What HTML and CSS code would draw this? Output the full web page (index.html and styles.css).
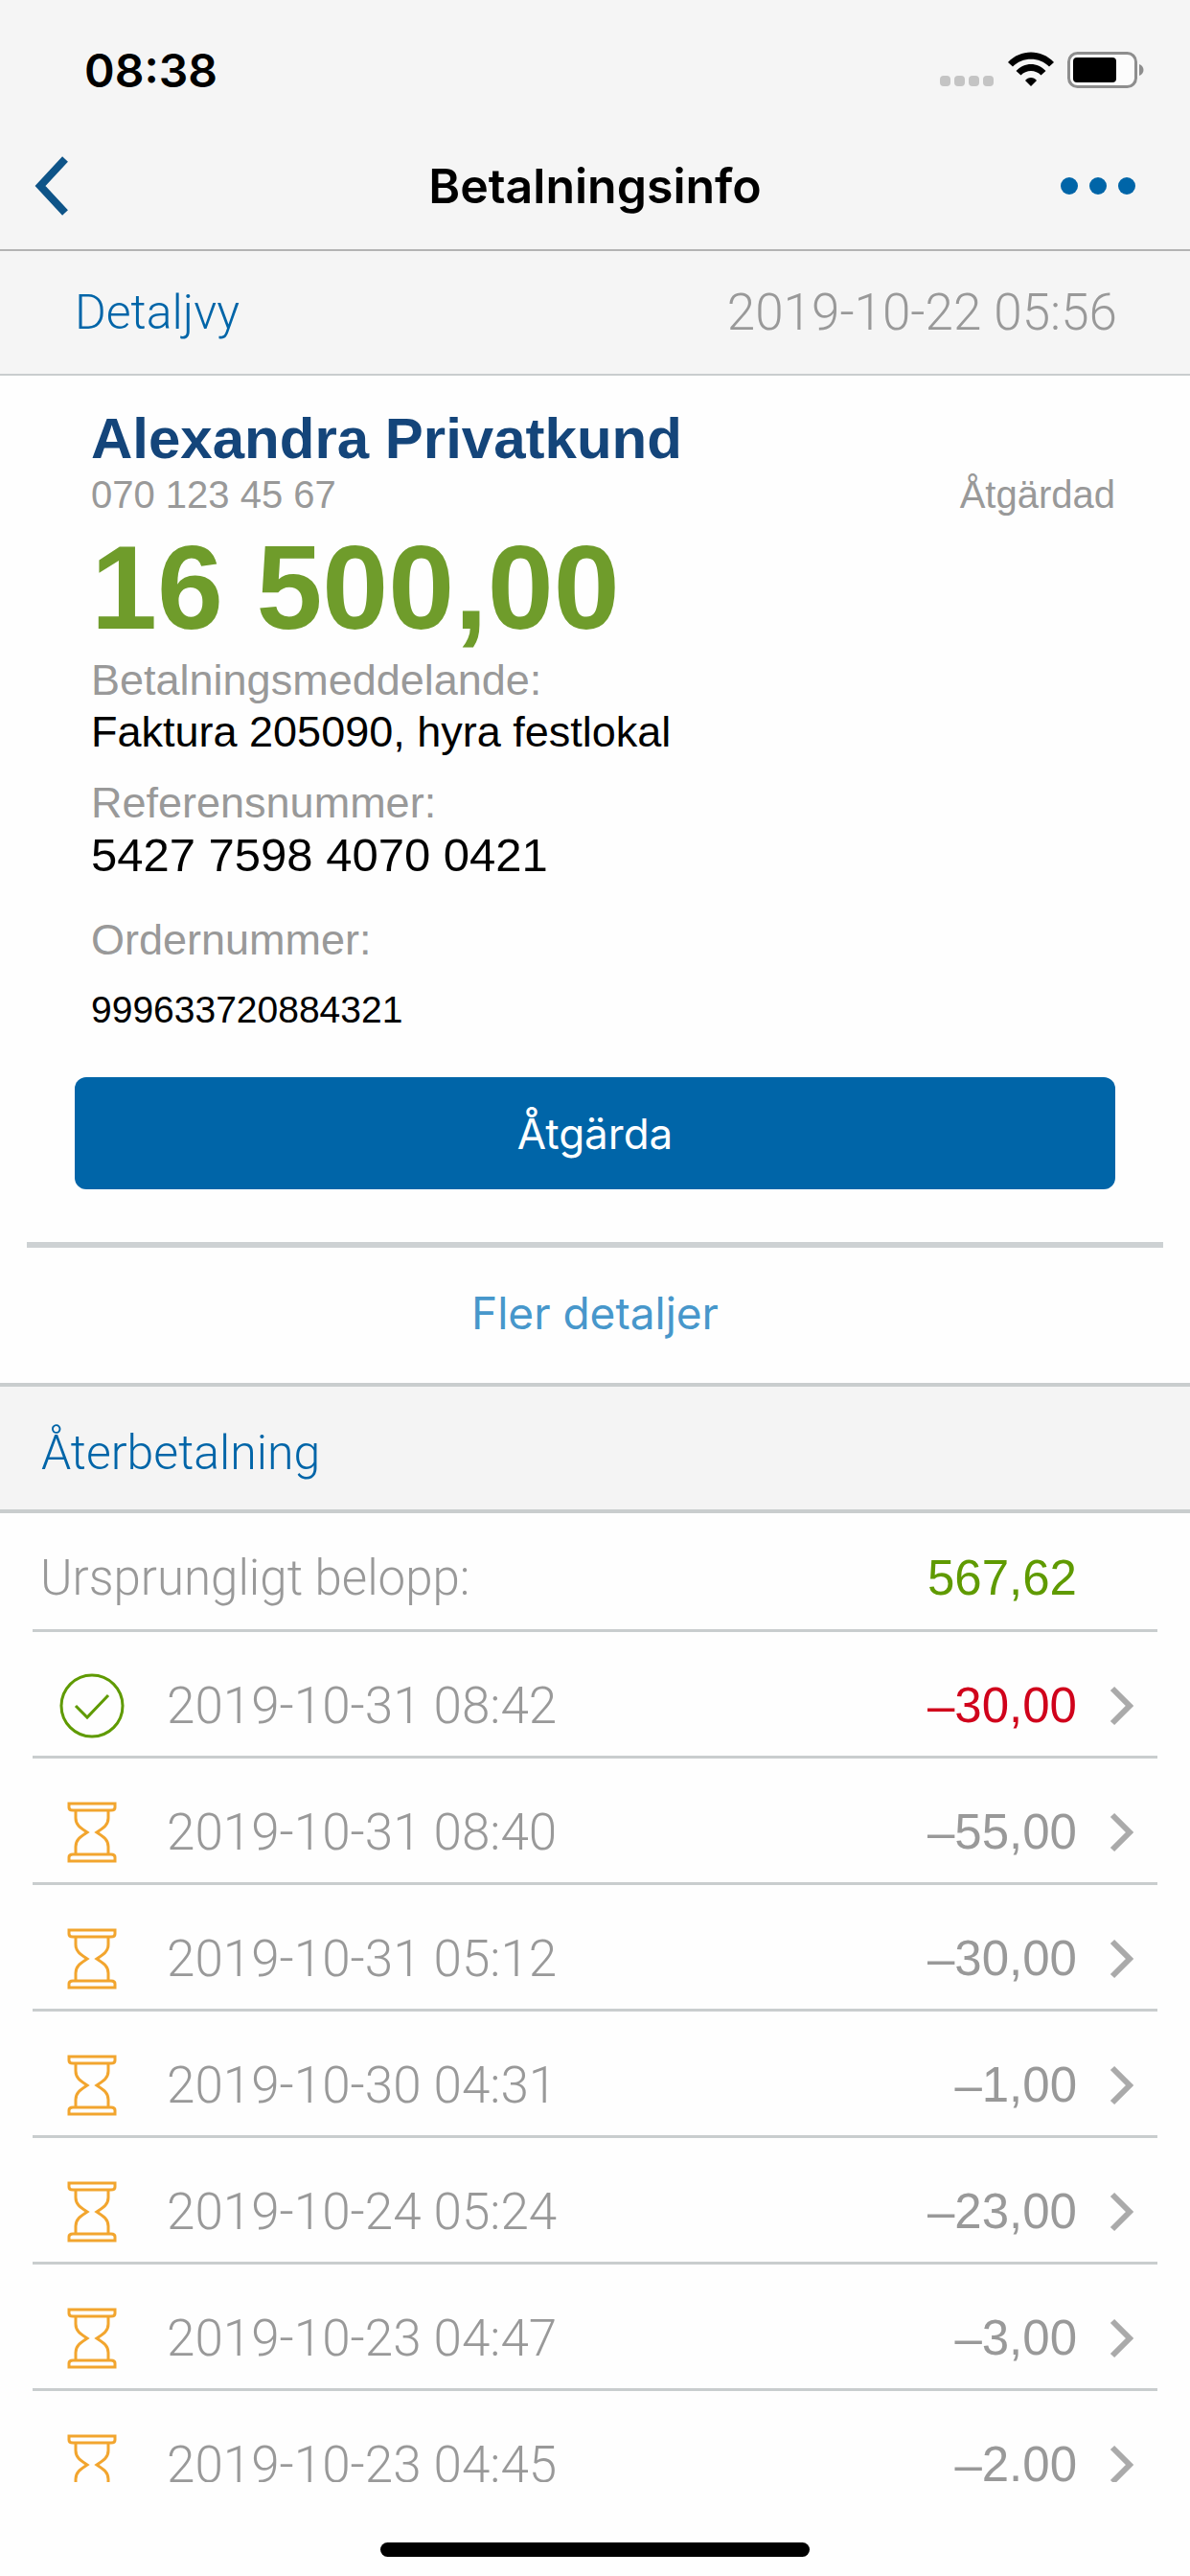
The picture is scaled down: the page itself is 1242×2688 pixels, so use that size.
FILE: index.html
```html
<!DOCTYPE html>
<html lang="sv">
<head>
    <meta charset="UTF-8">
    <meta name="viewport" content="width=device-width, initial-scale=1.0">
    <title>Betalningsinfo</title>
    <link rel="stylesheet" href="styles.css">
</head>
<body>
    <svg width="0" height="0" class="sprite">
        <symbol id="icon-done" viewBox="0 0 68 68">
            <circle cx="34" cy="34" r="32" fill="none" stroke="#5f9a00" stroke-width="3"/>
            <path d="M17 34 L29 46 L51 23" fill="none" stroke="#5f9a00" stroke-width="3"/>
        </symbol>
        <symbol id="icon-wait" viewBox="0 0 52 64">
            <g fill="none" stroke="#f2a52e" stroke-width="3">
                <path d="M2 2 H50 V6 Q50 9 46 9 H6 Q2 9 2 6 Z"/>
                <path d="M2 62 H50 V58 Q50 55 46 55 H6 Q2 55 2 58 Z"/>
                <path d="M9 9 V17 C9 25 15 28 21 32 C15 36 9 39 9 47 V55"/>
                <path d="M43 9 V17 C43 25 37 28 31 32 C37 36 43 39 43 47 V55"/>
            </g>
        </symbol>
        <symbol id="icon-next" viewBox="0 0 26 42">
            <path d="M3 3 L21 21 L3 39" fill="none" stroke="#aaaaaa" stroke-width="6"/>
        </symbol>
    </svg>

    <div class="screen">
        <header>
            <div class="status-bar">
                <span class="clock">08:38</span>
                <svg class="status-icons" width="214" height="38" viewBox="0 0 214 38">
                    <g fill="#c4c4c4">
                        <rect x="0" y="25" width="11" height="11" rx="4"/>
                        <rect x="15" y="25" width="11" height="11" rx="4"/>
                        <rect x="30" y="25" width="11" height="11" rx="4"/>
                        <rect x="45" y="25" width="11" height="11" rx="4"/>
                    </g>
                    <path d="M71 11 C84 -3 106 -3 119 11 L114 15.500 C104 5 86 5 76 15.500 Z"/>
                    <path d="M79.500 20 C88 10.500 102 10.500 110.500 20 L105.500 24.500 C100 18.500 90 18.500 84.500 24.500 Z"/>
                    <path d="M89 30 C92 26 98 26 101 30 L95 36 Z"/>
                    <rect x="134.500" y="1.500" width="70" height="35" rx="9" fill="#fcfcfc" stroke="#8e8e8e" stroke-width="3"/>
                    <rect x="139" y="6" width="45" height="26" rx="4"/>
                    <path d="M208 13 C214 15 214 23 208 25 Z" fill="#8e8e8e"/>
                </svg>
            </div>
            <nav class="nav-bar">
                <button class="icon-btn back" aria-label="Tillbaka">
                    <svg width="36" height="62" viewBox="0 0 36 62"><path d="M32 3 L6 31 L32 59" fill="none" stroke="#0e5488" stroke-width="8"/></svg>
                </button>
                <h1>Betalningsinfo</h1>
                <button class="icon-btn menu" aria-label="Mer">
                    <svg width="78" height="18" viewBox="0 0 78 18" fill="#0065a8"><circle cx="9" cy="9" r="9"/><circle cx="39" cy="9" r="9"/><circle cx="69" cy="9" r="9"/></svg>
                </button>
            </nav>
        </header>

        <main>
            <div class="detail-bar">
                <h2>Detaljvy</h2>
                <time>2019-10-22 05:56</time>
            </div>

            <section class="payment">
                <h3>Alexandra Privatkund</h3>
                <div class="contact">
                    <span>070 123 45 67</span>
                    <span>Åtgärdad</span>
                </div>
                <p class="total">16 500,00</p>
                <dl>
                    <dt>Betalningsmeddelande:</dt>
                    <dd>Faktura 205090, hyra festlokal</dd>
                    <dt class="reference">Referensnummer:</dt>
                    <dd class="reference">5427 7598 4070 0421</dd>
                    <dt class="order">Ordernummer:</dt>
                    <dd class="order">999633720884321</dd>
                </dl>
                <button class="action-btn">Åtgärda</button>
            </section>

            <div class="more">
                <a href="#">Fler detaljer</a>
            </div>

            <h2 class="section-title">Återbetalning</h2>
            <div class="original">
                <span>Ursprungligt belopp:</span>
                <span class="amount positive">567,62</span>
            </div>
            <ul class="refunds">
                <li><a href="#">
                    <span class="state"><svg width="68" height="68"><use href="#icon-done"/></svg></span>
                    <time>2019-10-31 08:42</time>
                    <span class="amount negative">–30,00</span>
                    <svg class="next" width="26" height="42"><use href="#icon-next"/></svg>
                </a></li>
                <li><a href="#">
                    <span class="state"><svg width="52" height="64"><use href="#icon-wait"/></svg></span>
                    <time>2019-10-31 08:40</time>
                    <span class="amount">–55,00</span>
                    <svg class="next" width="26" height="42"><use href="#icon-next"/></svg>
                </a></li>
                <li><a href="#">
                    <span class="state"><svg width="52" height="64"><use href="#icon-wait"/></svg></span>
                    <time>2019-10-31 05:12</time>
                    <span class="amount">–30,00</span>
                    <svg class="next" width="26" height="42"><use href="#icon-next"/></svg>
                </a></li>
                <li><a href="#">
                    <span class="state"><svg width="52" height="64"><use href="#icon-wait"/></svg></span>
                    <time>2019-10-30 04:31</time>
                    <span class="amount">–1,00</span>
                    <svg class="next" width="26" height="42"><use href="#icon-next"/></svg>
                </a></li>
                <li><a href="#">
                    <span class="state"><svg width="52" height="64"><use href="#icon-wait"/></svg></span>
                    <time>2019-10-24 05:24</time>
                    <span class="amount">–23,00</span>
                    <svg class="next" width="26" height="42"><use href="#icon-next"/></svg>
                </a></li>
                <li><a href="#">
                    <span class="state"><svg width="52" height="64"><use href="#icon-wait"/></svg></span>
                    <time>2019-10-23 04:47</time>
                    <span class="amount">–3,00</span>
                    <svg class="next" width="26" height="42"><use href="#icon-next"/></svg>
                </a></li>
                <li><a href="#">
                    <span class="state"><svg width="52" height="64"><use href="#icon-wait"/></svg></span>
                    <time>2019-10-23 04:45</time>
                    <span class="amount">–2.00</span>
                    <svg class="next" width="26" height="42"><use href="#icon-next"/></svg>
                </a></li>
            </ul>
        </main>

        <footer>
            <div class="home-indicator"></div>
        </footer>
    </div>
</body>
</html>
```
FILE: styles.css
```css
:root {
    --bar: #f5f5f5;
    --blue: #0065a8;
    --grey: #999999;
    --line: #c9cdce;
    --light: Roboto, "Liberation Sans", sans-serif;
}
* { box-sizing: border-box; }
body {
    margin: 0;
    background: #fefefe;
    color: #000;
    font-family: "Liberation Sans", Arial, sans-serif;
}
h1, h2, h3, p, dl, dd, ul { margin: 0; padding: 0; }
h1, h2 { font-weight: normal; }
a { text-decoration: none; }
button {
    border: none;
    padding: 0;
    cursor: pointer;
}
svg { display: block; }
.sprite { position: absolute; }
.screen {
    height: 100vh;
    display: flex;
    flex-direction: column;
}

/* header */
header {
    flex: none;
    background: var(--bar);
    border-bottom: 2px solid #b4b4b4;
}
.status-bar {
    display: flex;
    justify-content: space-between;
    align-items: center;
    height: 130px;
    padding: 16px 47px 0 88px;
}
.clock {
    font-family: Inter, sans-serif;
    font-size: 48px;
    font-weight: 600;
}
.nav-bar {
    display: grid;
    grid-template-columns: 1fr auto 1fr;
    align-items: center;
    height: 130px;
    padding-bottom: 2px;
}
.icon-btn { background: none; }
.back {
    justify-self: start;
    padding-left: 36px;
}
.menu {
    justify-self: end;
    padding-right: 57px;
}
.nav-bar h1 {
    font-family: Inter, sans-serif;
    font-size: 50px;
    font-weight: 600;
}

main {
    flex: 1;
    min-height: 0;
    overflow: hidden;
}
.detail-bar {
    display: flex;
    justify-content: space-between;
    align-items: center;
    height: 130px;
    padding: 0 76px 0 78px;
    background: var(--bar);
    border-bottom: 2px solid var(--line);
}
h2 {
    font-family: var(--light);
    font-size: 50px;
    font-weight: 300;
    color: var(--blue);
}
time {
    font-family: var(--light);
    font-size: 53px;
    font-weight: 300;
    color: var(--grey);
}

/* payment */
.payment {
    margin: 0 28px;
    padding: 30px 50px 55px;
    border-bottom: 6px solid #cdd1d3;
}
.payment h3 {
    padding: 0 17px;
    font-size: 60px;
    line-height: 72px;
    color: #14457a;
}
.contact {
    display: flex;
    justify-content: space-between;
    padding-left: 17px;
    font-size: 40px;
    line-height: 44px;
    color: var(--grey);
}
.total {
    padding: 0 17px;
    font-size: 124px;
    font-weight: bold;
    line-height: 150px;
    color: #6f9c2b;
}
dl { padding: 0 17px; }
dt {
    font-size: 45px;
    line-height: 44px;
    color: var(--grey);
}
dd {
    font-size: 45px;
    line-height: 64px;
}
dt.reference { margin-top: 20px; }
dd.reference { font-size: 49px; }
dt.order { margin-top: 35px; }
dd.order {
    margin-top: 19px;
    font-size: 39px;
}
.action-btn {
    width: 100%;
    height: 117px;
    margin-top: 38px;
    border-radius: 12px;
    background: var(--blue);
    color: white;
    font-family: Inter, sans-serif;
    font-size: 44px;
}
.more {
    padding: 36px 0 40px;
    text-align: center;
    font-family: Inter, sans-serif;
    font-size: 46px;
    line-height: 65px;
}
.more a { color: #4797cb; }

/* refunds */
.section-title {
    height: 136px;
    padding: 8px 43px 0;
    border-top: 4px solid var(--line);
    border-bottom: 4px solid var(--line);
    background: #f4f4f4;
    line-height: 122px;
}
.original {
    display: flex;
    justify-content: space-between;
    align-items: center;
    height: 124px;
    margin: 0 34px;
    padding: 14px 84px 0 8px;
    border-bottom: 3px solid var(--line);
    font-family: var(--light);
    font-size: 51px;
    font-weight: 300;
    color: var(--grey);
}
.refunds {
    margin: 0 34px;
    list-style: none;
}
.refunds a {
    display: flex;
    align-items: center;
    height: 132px;
    padding: 24px 24px 0 16px;
    border-bottom: 3px solid var(--line);
}
.state {
    display: flex;
    justify-content: center;
    width: 92px;
    margin-right: 32px;
}
.amount {
    margin-left: auto;
    font-family: "Liberation Sans", Arial, sans-serif;
    font-size: 51px;
    font-weight: normal;
    color: var(--grey);
}
.positive { color: #5f9a00; }
.negative { color: #d0021b; }
.next { margin-left: 34px; }

footer {
    flex: none;
    display: flex;
    justify-content: center;
    height: 98px;
    padding-top: 63px;
}
.home-indicator {
    width: 36%;
    height: 15px;
    border-radius: 8px;
    background: black;
}
```
